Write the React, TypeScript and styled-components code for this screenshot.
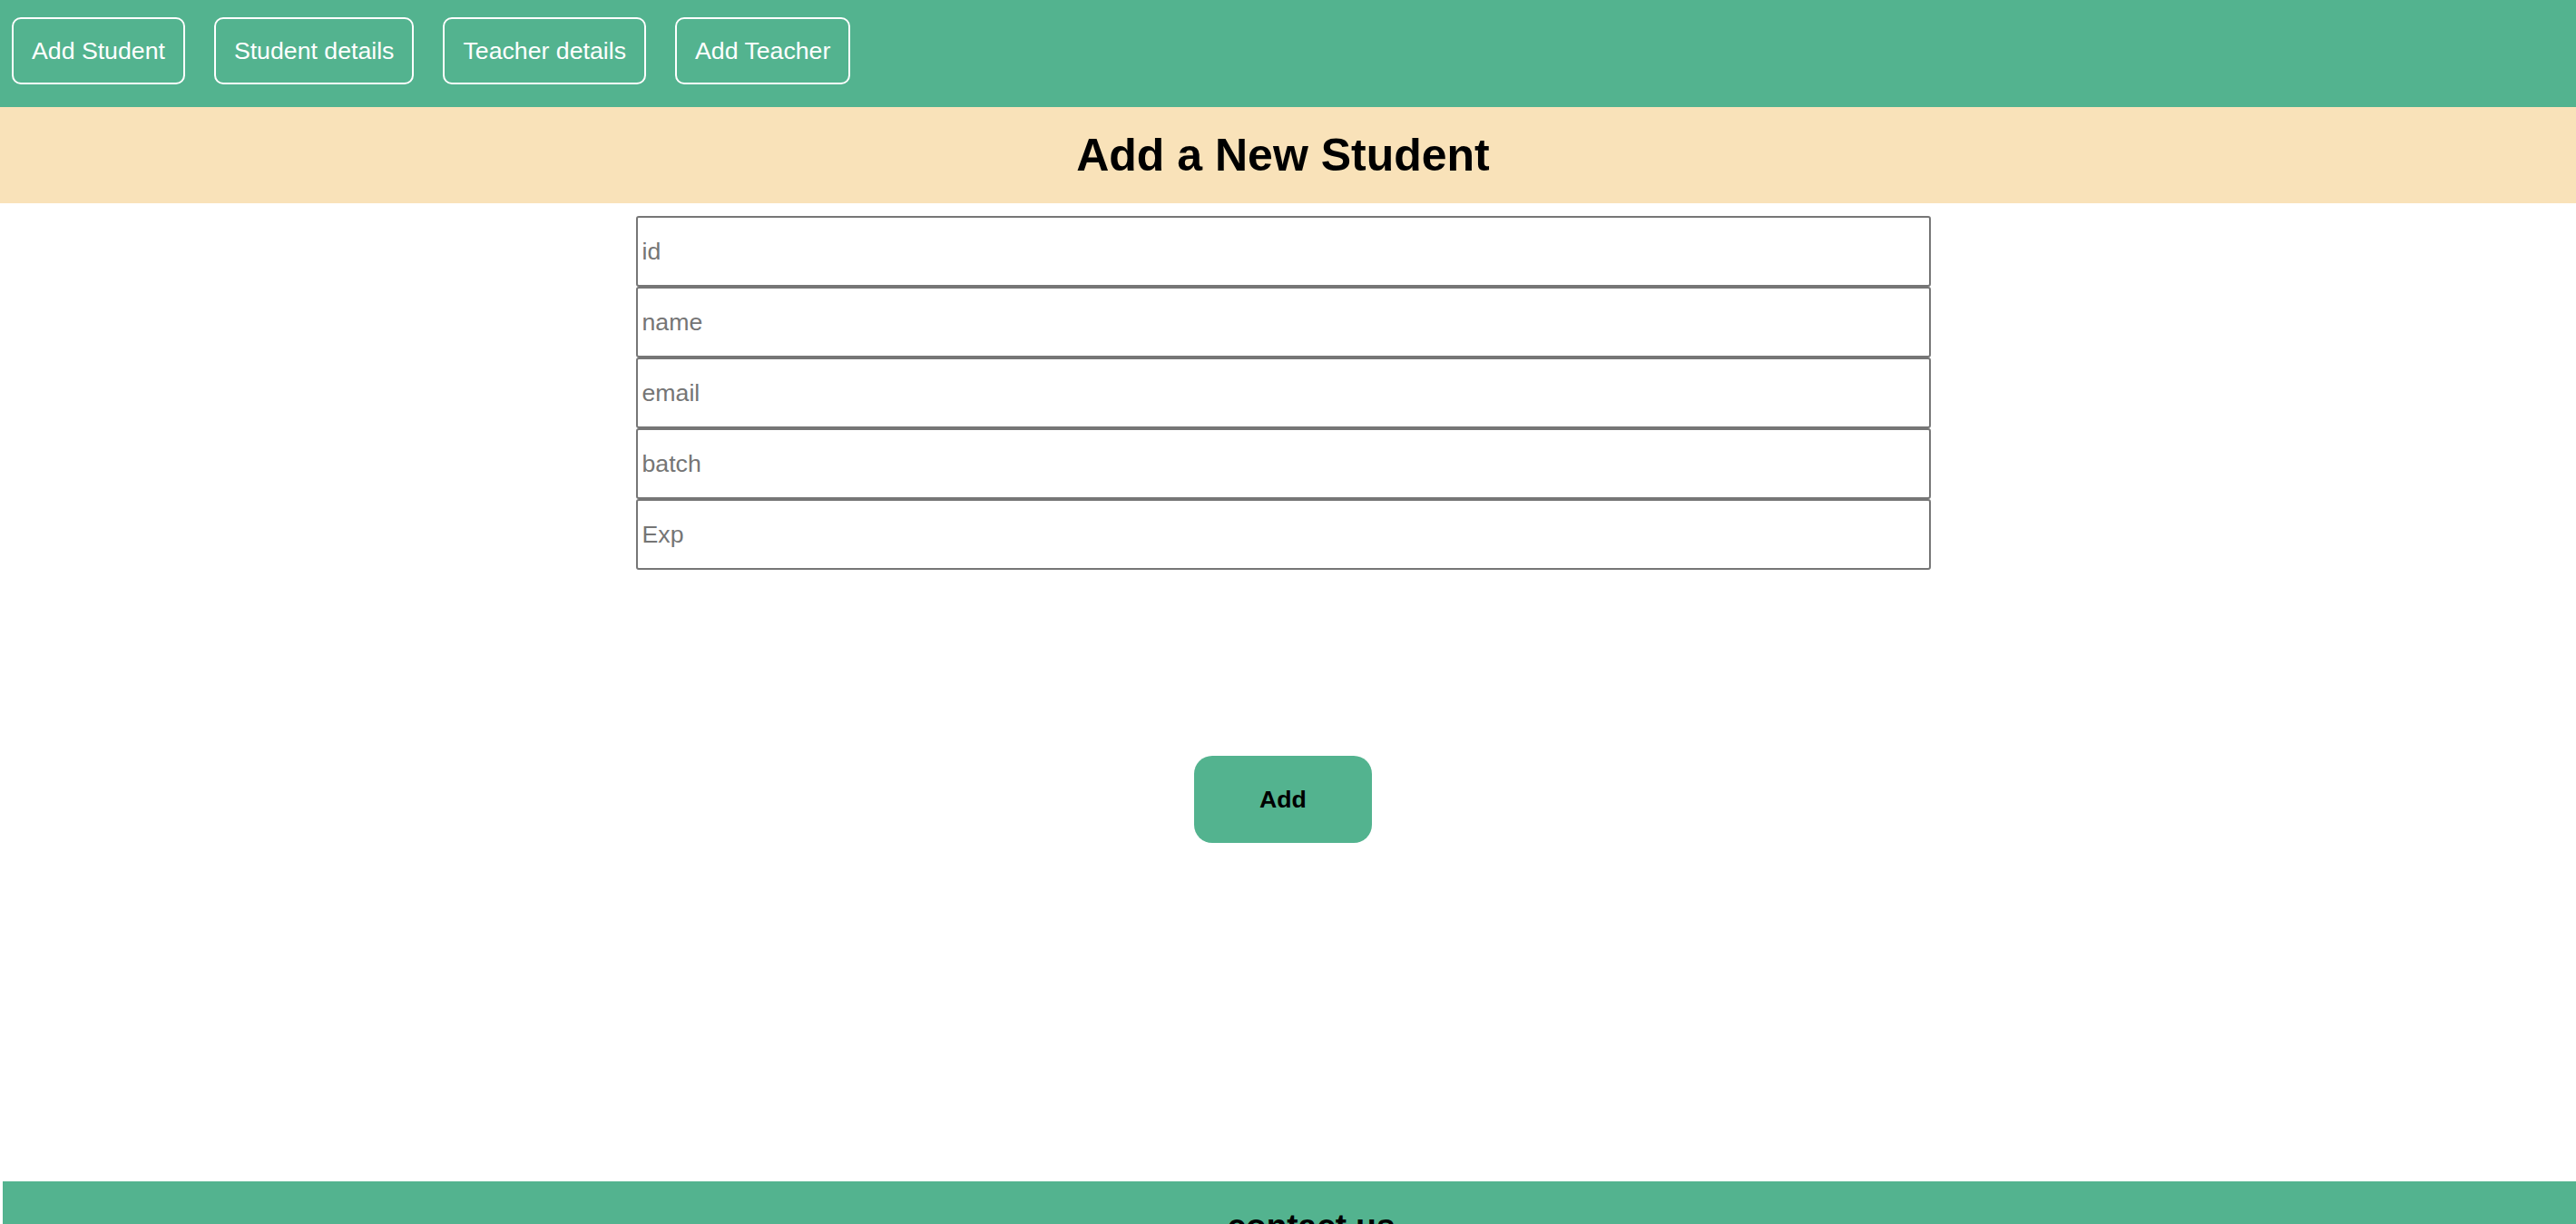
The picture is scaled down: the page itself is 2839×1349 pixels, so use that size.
import React from "react";
import styled, { createGlobalStyle } from "styled-components";

const Global = createGlobalStyle`
  html, body {
    margin: 0;
    padding: 0;
    overflow: hidden;
    background: #ffffff;
    font-family: "Liberation Sans", Arial, sans-serif;
  }
  * { box-sizing: border-box; }
`;

const GREEN = "#53b38f";

const Nav = styled.nav`
  height: 118px;
  background: ${GREEN};
  display: flex;
  align-items: flex-start;
  gap: 32px;
  padding: 19px 0 0 13px;
`;

const NavButton = styled.button`
  height: 74px;
  padding: 0 20px;
  background: transparent;
  border: 2px solid #ffffff;
  border-radius: 10px;
  color: #ffffff;
  font-family: "Liberation Sans", Arial, sans-serif;
  font-size: 26.7px;
  cursor: pointer;
`;

const Banner = styled.header`
  height: 106px;
  background: #f9e2b9;
  display: flex;
  align-items: center;
  justify-content: center;
  padding-right: 11px;
`;

const Title = styled.h1`
  margin: 0;
  font-family: "Liberation Sans", Arial, sans-serif;
  font-size: 50px;
  font-weight: 700;
  color: #000;
`;

const Main = styled.main`
  display: flex;
  flex-direction: column;
  align-items: center;
  padding: 14px 11px 0 0;
`;

const Form = styled.form`
  display: flex;
  flex-direction: column;
  align-items: center;
`;

const Field = styled.input`
  display: block;
  width: 1427px;
  height: 78px;
  margin: 0;
  padding: 0 5px;
  border: 2px solid #767676;
  border-radius: 3px;
  font-family: "Liberation Sans", Arial, sans-serif;
  font-size: 26.7px;
  color: #000;
  background: #fff;
  &::placeholder {
    color: #757575;
  }
`;

const SubmitButton = styled.button`
  margin-top: 205px;
  width: 196px;
  height: 96px;
  border: none;
  border-radius: 20px;
  background: ${GREEN};
  color: #000;
  font-family: "Liberation Sans", Arial, sans-serif;
  font-size: 26.7px;
  font-weight: 700;
  cursor: pointer;
`;

const Footer = styled.footer`
  margin: 373px 0 0 3px;
  width: 2884px;
  height: 200px;
  background: ${GREEN};
  padding-top: 29px;
  text-align: center;
`;

const FooterTitle = styled.h2`
  margin: 0;
  font-family: "Liberation Sans", Arial, sans-serif;
  font-size: 37px;
  font-weight: 700;
  color: #000;
`;

const navItems = ["Add Student", "Student details", "Teacher details", "Add Teacher"];
const fields = ["id", "name", "email", "batch", "Exp"];

export default function App() {
  return (
    <>
      <Global />
      <Nav>
        {navItems.map((n) => (
          <NavButton key={n}>{n}</NavButton>
        ))}
      </Nav>
      <Banner>
        <Title>Add a New Student</Title>
      </Banner>
      <Main>
        <Form onSubmit={(e) => e.preventDefault()}>
          {fields.map((f) => (
            <Field key={f} placeholder={f} />
          ))}
          <SubmitButton type="submit">Add</SubmitButton>
        </Form>
      </Main>
      <Footer>
        <FooterTitle>contact us</FooterTitle>
      </Footer>
    </>
  );
}
